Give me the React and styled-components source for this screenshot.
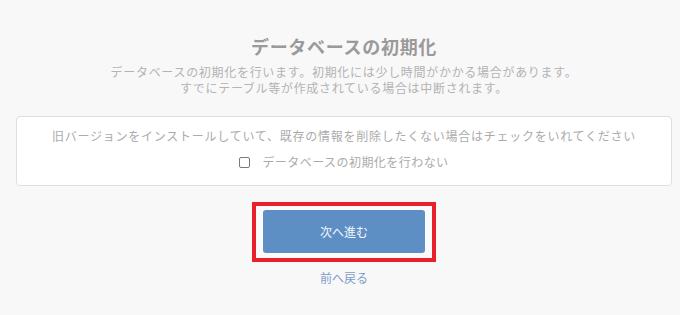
import React, { useState } from "react"
import styled, { createGlobalStyle } from "styled-components"

const GlobalStyle = createGlobalStyle`
  html, body {
    margin: 0;
    padding: 0;
    background: #f8f8f8;
  }
  body {
    font-family: "Noto Sans CJK JP", "Noto Sans", sans-serif;
    -webkit-font-smoothing: antialiased;
  }
`

const Page = styled.div`
  padding: 34px 8px 30px 16px;
  display: flex;
  flex-direction: column;
  align-items: stretch;
`

const Title = styled.h1`
  margin: 0;
  font-size: 18px;
  line-height: 24px;
  font-weight: 700;
  letter-spacing: 0.7px;
  color: #9a9a9a;
  text-align: center;
`

const Lead = styled.p`
  margin: 6px 0 0;
  font-size: 12px;
  line-height: 16px;
  letter-spacing: 0.7px;
  color: #b3b3b3;
  text-align: center;
`

const Card = styled.div`
  margin-top: 20px;
  height: 70px;
  box-sizing: border-box;
  padding: 9px 0 0;
  background: #fff;
  border: 1px solid #dde0e0;
  border-radius: 4px;
  display: flex;
  flex-direction: column;
  align-items: center;
  gap: 6px;
`

const Note = styled.div`
  font-size: 12px;
  line-height: 20px;
  letter-spacing: 0.75px;
  color: #ababab;
`

const CheckLabel = styled.label`
  display: flex;
  align-items: center;
  gap: 12px;
  font-size: 12px;
  line-height: 20px;
  letter-spacing: 0.45px;
  color: #ababab;
  cursor: pointer;
`

const Box = styled.span`
  width: 9px;
  height: 9px;
  border: 1px solid #7a7a7a;
  border-radius: 2px;
  background: ${({ checked }) => (checked ? "#7a7a7a" : "#fff")};
`

const Highlight = styled.div`
  align-self: center;
  margin-top: 16px;
  border: 4px solid #e8202a;
  padding: 4px 7px 5px;
  background: #fafafa;
`

const NextButton = styled.button`
  display: block;
  width: 162px;
  height: 43px;
  border: none;
  border-radius: 3px;
  background: #5e8fc4;
  color: #f4f7fb;
  font-family: inherit;
  font-size: 12px;
  cursor: pointer;
`

const BackLink = styled.a`
  align-self: center;
  margin-top: 7px;
  font-size: 12px;
  line-height: 18px;
  color: #7d9dca;
  text-decoration: none;
  cursor: pointer;
`

export default function App() {
  const [skip, setSkip] = useState(false)

  return (
    <>
      <GlobalStyle />
      <Page>
        <Title>データベースの初期化</Title>
        <Lead>
          データベースの初期化を行います。初期化には少し時間がかかる場合があります。
          <br />
          すでにテーブル等が作成されている場合は中断されます。
        </Lead>
        <Card>
          <Note>旧バージョンをインストールしていて、既存の情報を削除したくない場合はチェックをいれてください</Note>
          <CheckLabel onClick={() => setSkip(!skip)}>
            <Box checked={skip} />
            データベースの初期化を行わない
          </CheckLabel>
        </Card>
        <Highlight>
          <NextButton>次へ進む</NextButton>
        </Highlight>
        <BackLink>前へ戻る</BackLink>
      </Page>
    </>
  )
}
